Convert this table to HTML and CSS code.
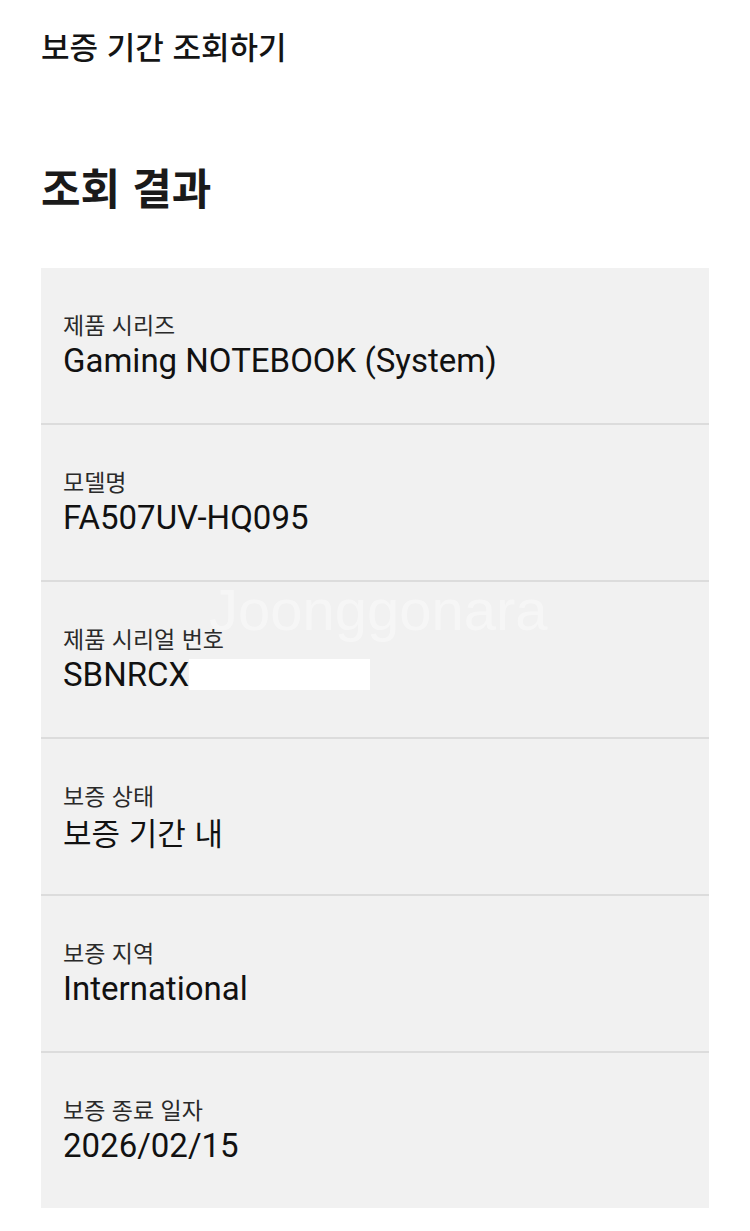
FILE: index.html
```html
<!DOCTYPE html>
<html lang="ko">
<head>
<meta charset="utf-8">
<link rel="stylesheet" href="styles.css">
</head>
<body>
<div class="page">
  <h1 class="title">보증 기간 조회하기</h1>
  <h2 class="heading">조회 결과</h2>
  <div class="card">
    <div class="watermark">Joonggonara</div>
    <div class="row">
      <div class="label">제품 시리즈</div>
      <div class="value">Gaming NOTEBOOK (System)</div>
    </div>
    <div class="row">
      <div class="label">모델명</div>
      <div class="value">FA507UV-HQ095</div>
    </div>
    <div class="row">
      <div class="label">제품 시리얼 번호</div>
      <div class="value">SBNRCX<span class="mask"></span></div>
    </div>
    <div class="row">
      <div class="label">보증 상태</div>
      <div class="value ko">보증 기간 내</div>
    </div>
    <div class="row">
      <div class="label">보증 지역</div>
      <div class="value">International</div>
    </div>
    <div class="row">
      <div class="label">보증 종료 일자</div>
      <div class="value">2026/02/15</div>
    </div>
  </div>
</div>
</body>
</html>
```

FILE: styles.css
```css
html, body {
  margin: 0;
  padding: 0;
  background: #ffffff;
}
.page {
  padding: 24px 41px 0 41px;
  font-family: Roboto, "Noto Sans CJK KR", sans-serif;
  color: #111111;
}
.title {
  margin: 0;
  font-family: "Noto Sans CJK KR", sans-serif;
  font-size: 31px;
  line-height: 43px;
  font-weight: 500;
  color: #141414;
}
.heading {
  margin: 93px 0 0 0;
  font-family: "Noto Sans CJK KR", sans-serif;
  font-size: 43px;
  line-height: 52px;
  font-weight: 700;
  color: #1a1a1a;
}
.card {
  position: relative;
  margin-top: 56px;
  background: #f1f1f1;
}
.row {
  position: relative;
  height: 155px;
  display: flex;
  flex-direction: column;
  justify-content: center;
  padding-left: 22px;
  border-bottom: 2px solid #dcdcdc;
}
.row:last-child {
  border-bottom: none;
}
.label {
  font-family: "Noto Sans CJK KR", sans-serif;
  font-size: 23px;
  line-height: 30px;
  color: #2a2a2a;
}
.value {
  font-size: 33px;
  line-height: 44px;
  color: #111111;
  display: flex;
  align-items: center;
}
.value.ko {
  font-family: "Noto Sans CJK KR", sans-serif;
  font-size: 31px;
}
.mask {
  display: inline-block;
  width: 181px;
  height: 31px;
  background: #ffffff;
}
.watermark {
  position: absolute;
  left: 168px;
  top: 308px;
  z-index: 2;
  font-family: "Liberation Sans", sans-serif;
  font-size: 58px;
  font-weight: 400;
  color: rgba(255, 255, 255, 0.4);
  pointer-events: none;
}
```
